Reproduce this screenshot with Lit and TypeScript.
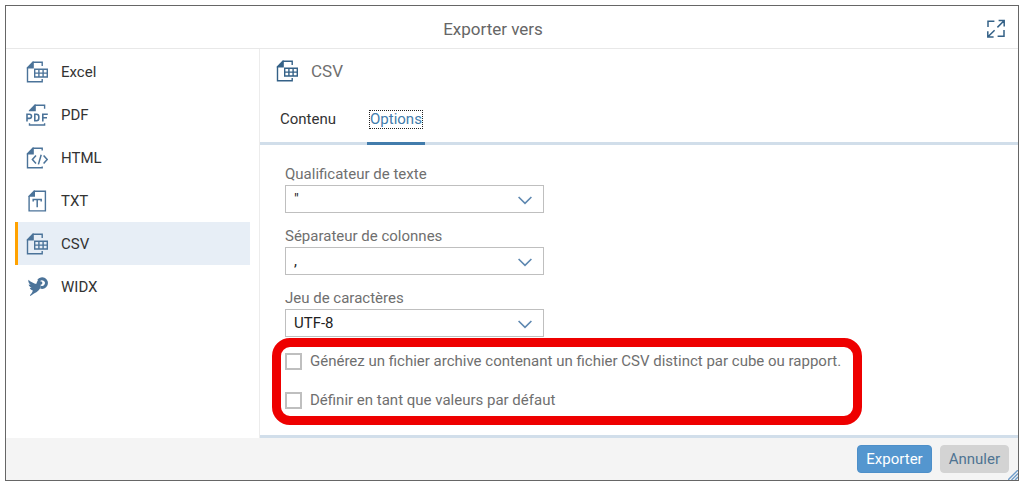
import { LitElement, html, css, svg, TemplateResult } from "lit";
import { customElement, property, state } from "lit/decorators.js";
import { classMap } from "lit/directives/class-map.js";

type IconName = "sheet" | "pdf" | "html" | "txt" | "widx" | "expand" | "chevron";

const pageFold = svg`<path d="M7.8 0.6 V7.4 H0.8 V6.4 L6.6 0.6 Z" fill="currentColor" stroke="none"/>`;

const icons: Record<IconName, TemplateResult> = {
  sheet: svg`
    ${pageFold}
    <path d="M6.6 1.3 H16.2 V5 M1.5 6.6 V20.8 H16.2 V18" />
    <path d="M8.7 8.2 H21.3 V16 H8.7 Z M8.7 12.1 H21.3 M12.9 8.2 V16 M17.1 8.2 V16" />`,
  pdf: svg`
    <path d="M9.8 0.6 V7.2 H2.8 V6.4 L8.6 0.6 Z" fill="currentColor" stroke="none"/>
    <path d="M8.6 1.3 H18.6 V4.8 M3.5 19.2 V21 H18.6 V19.2" />
    <path d="M1 17.4 V10.2 H3.4 A2 2 0 0 1 3.4 14.4 H1 M8.8 10.2 V16.7 H10.4 A2.4 2.4 0 0 0 12.8 14.3 V12.6 A2.4 2.4 0 0 0 10.4 10.2 Z M16.8 17.4 V10.2 H21.8 M16.8 13.8 H21" stroke-width="1.6"/>`,
  html: svg`
    ${pageFold}
    <path d="M6.6 1.3 H16.2 V3.6 M1.5 6.6 V20.8 H16.2 V19.4" />
    <path d="M10 8.6 L6.4 12.6 L10 16.6 M17.6 8.6 L21.2 12.6 L17.6 16.6 M15.2 7.8 L12.4 17.4" stroke-width="1.5"/>`,
  txt: svg`
    <path d="M9 0.6 V6.8 H2.4 V6 L7.8 0.6 Z" fill="currentColor" stroke="none"/>
    <path d="M7.8 1.3 H19.4 V20.9 H3.1 V6" />
    <path d="M7.2 11.4 V9.4 H15.2 V11.4 M11.2 9.4 V17.2" stroke-width="1.5"/>`,
  widx: svg`
    <path d="M2.4 3.8 C5.2 6.4 7.8 7.4 10.2 8 C11 5.6 11.8 3.6 13.8 2.4 L14.6 8.6 L14.8 11 C13.4 14 11.6 16.2 8 17.4 C6.8 18 5.6 19 4.4 20 C3.6 19.6 4.2 18.6 5.2 17.8 C6.2 16.8 6.6 15.6 6.8 14.6 C5.2 14 4.2 13.2 3.8 12 L5.6 12 C3.8 11 3 10 2.6 8.6 L4.6 8.8 C2.8 7.4 2 5.8 2.4 3.8 Z" fill="currentColor" stroke="none"/>
    <path d="M12.6 4.6 A4.3 4.3 0 1 1 14.6 11.1" stroke-width="3"/>
    <circle cx="14.6" cy="7" r="1.8" fill="currentColor" stroke="none"/>`,
  expand: svg`
    <path d="M2 9 V3.2 H8.4 M18 12 V18.2 H11.6 M11.4 9.4 L18 2.8 M12.6 2.6 H18.2 V8.4 M8.6 12.2 L2 18.8 M1.8 13.2 V19 H7.6" stroke-width="1.5"/>`,
  chevron: svg`<path d="M4.6 8 L11 14.4 L17.4 8" stroke-width="1.6"/>`,
};

@customElement("ui-icon")
export class UiIcon extends LitElement {
  @property() name: IconName = "sheet";

  static styles = css`
    :host {
      display: block;
      flex: none;
      width: 22px;
      height: 22px;
    }
    .glyph {
      display: block;
      width: 100%;
      height: 100%;
      fill: none;
      stroke: currentColor;
      stroke-width: 1.4;
    }
  `;

  render() {
    return html`<svg class="glyph" viewBox="0 0 22 22" aria-hidden="true">${icons[this.name]}</svg>`;
  }
}

@customElement("select-field")
export class SelectField extends LitElement {
  @property() label = "";
  @property({ type: Array }) options: string[] = [];

  static styles = css`
    :host {
      display: block;
    }
    .label {
      display: block;
      line-height: 20px;
      margin-bottom: 1px;
      color: #6f6f6f;
    }
    .control {
      position: relative;
      max-width: 259px;
    }
    .select {
      appearance: none;
      display: block;
      box-sizing: border-box;
      width: 100%;
      height: 28px;
      margin: 0;
      padding: 0 32px 0 8px;
      border: 1px solid #bfbfbf;
      border-radius: 0;
      background: #fff;
      color: #222;
      font: inherit;
    }
    .arrow {
      position: absolute;
      right: 8px;
      top: 4px;
      color: #5d87b0;
      pointer-events: none;
    }
  `;

  render() {
    return html`
      <label class="label" for="field">${this.label}</label>
      <div class="control">
        <select class="select" id="field">
          ${this.options.map((o) => html`<option>${o}</option>`)}
        </select>
        <ui-icon class="arrow" name="chevron"></ui-icon>
      </div>
    `;
  }
}

interface Format {
  name: string;
  icon: IconName;
}

@customElement("app-root")
export class AppRoot extends LitElement {
  @state() private format = "CSV";
  @state() private tab = "Options";

  private formats: Format[] = [
    { name: "Excel", icon: "sheet" },
    { name: "PDF", icon: "pdf" },
    { name: "HTML", icon: "html" },
    { name: "TXT", icon: "txt" },
    { name: "CSV", icon: "sheet" },
    { name: "WIDX", icon: "widx" },
  ];

  static styles = css`
    :host {
      display: block;
      padding: 5px;
      background: #fff;
      color: #333;
      font-family: Roboto, "Liberation Sans", sans-serif;
      font-size: 15px;
      line-height: 20px;
    }
    button {
      margin: 0;
      padding: 0;
      border: 0;
      background: none;
      color: inherit;
      font: inherit;
    }
    .dialog {
      position: relative;
      border: 1px solid #666;
      background: #fff;
    }
    .header {
      display: grid;
      grid-template-columns: 1fr auto 1fr;
      align-items: center;
      height: 43px;
      padding: 3px 10px 0 0;
      box-sizing: border-box;
      border-bottom: 1px solid #e8e8e8;
    }
    .title {
      grid-column: 2;
      margin: 0 28px 0 0;
      font-size: 17px;
      font-weight: 400;
      color: #666;
    }
    .expand {
      justify-self: end;
      color: #346187;
    }
    .body {
      display: grid;
      grid-template-columns: 254px 1fr;
    }
    .nav {
      padding: 1px 9px 0 9px;
      border-right: 1px solid #ececec;
    }
    .item {
      display: flex;
      align-items: center;
      gap: 13px;
      width: 100%;
      height: 43px;
      box-sizing: border-box;
      padding-left: 8px;
      border-left: 3px solid transparent;
      text-align: left;
    }
    .item ui-icon {
      color: #4b7399;
    }
    .item.selected {
      border-left-color: #ffa200;
      background: #e7eef6;
    }
    .main {
      border-bottom: 3px solid #d1deea;
      padding-bottom: 10px;
    }
    .heading {
      display: flex;
      align-items: center;
      gap: 13px;
      margin: 0;
      padding: 11px 16px 0;
      font-size: 17px;
      font-weight: 400;
      color: #6f6f6f;
    }
    .heading ui-icon {
      color: #346187;
    }
    .tabs {
      display: flex;
      gap: 28px;
      margin-top: 28px;
      padding-left: 17px;
      border-bottom: 3px solid #d1deea;
    }
    .tab {
      padding: 0 2px 13px;
      margin-bottom: -3px;
      border-bottom: 3px solid transparent;
      color: #333;
      outline: none;
    }
    .tab-text {
      display: block;
      border: 1px dotted transparent;
      line-height: 17px;
    }
    .tab.active {
      border-bottom-color: #427cac;
      color: #427cac;
    }
    .tab.active .tab-text {
      border-color: #222;
    }
    .form {
      display: flex;
      flex-direction: column;
      gap: 13px;
      padding: 19px 25px 0;
    }
    .callout {
      display: flex;
      flex-direction: column;
      align-items: flex-start;
      gap: 19px;
      width: fit-content;
      margin: 1px 12px 0;
      padding: 4px 12px 6px 4px;
      border: 9px solid #ee0000;
      border-radius: 18px;
    }
    .check {
      display: flex;
      align-items: center;
      gap: 8px;
      color: #6f6f6f;
    }
    .box {
      appearance: none;
      flex: none;
      box-sizing: border-box;
      width: 17px;
      height: 17px;
      margin: 0;
      border: 2px solid #bfbfbf;
      background: #fff;
    }
    .box:checked {
      background: #427cac;
    }
    .footer {
      display: flex;
      justify-content: flex-end;
      gap: 8px;
      padding: 7px 9px;
      background: #f4f4f4;
    }
    .action {
      height: 28px;
      padding: 0 8px;
      border: 1px solid #d3d3d3;
      border-radius: 4px;
      background: #d3d3d3;
      color: #4f7492;
    }
    .action.primary {
      border-color: #4d8fc9;
      background: #5496cf;
      color: #fff;
    }
    .grip {
      position: absolute;
      right: 0;
      bottom: 0;
      width: 10px;
      height: 10px;
      stroke: #6f9cc9;
      stroke-width: 1.4;
    }
  `;

  render() {
    return html`
      <section class="dialog" role="dialog" aria-labelledby="title">
        <header class="header">
          <h1 class="title" id="title">Exporter vers</h1>
          <button class="expand" aria-label="Agrandir"><ui-icon name="expand"></ui-icon></button>
        </header>
        <div class="body">
          <nav class="nav">
            ${this.formats.map(
              (f) => html`
                <button
                  class=${classMap({ item: true, selected: f.name === this.format })}
                  @click=${() => (this.format = f.name)}
                >
                  <ui-icon name=${f.icon}></ui-icon><span>${f.name}</span>
                </button>
              `
            )}
          </nav>
          <main class="main">
            <h2 class="heading"><ui-icon name="sheet"></ui-icon>CSV</h2>
            <div class="tabs" role="tablist">
              ${["Contenu", "Options"].map(
                (t) => html`
                  <button
                    role="tab"
                    aria-selected=${t === this.tab}
                    class=${classMap({ tab: true, active: t === this.tab })}
                    @click=${() => (this.tab = t)}
                  ><span class="tab-text">${t}</span></button>
                `
              )}
            </div>
            <div class="form">
              <select-field label="Qualificateur de texte" .options=${['"', "'"]}></select-field>
              <select-field label="Séparateur de colonnes" .options=${[",", ";"]}></select-field>
              <select-field label="Jeu de caractères" .options=${["UTF-8"]}></select-field>
            </div>
            <div class="callout">
              <label class="check">
                <input class="box" type="checkbox" />
                <span>Générez un fichier archive contenant un fichier CSV distinct par cube ou rapport.</span>
              </label>
              <label class="check">
                <input class="box" type="checkbox" />
                <span>Définir en tant que valeurs par défaut</span>
              </label>
            </div>
          </main>
        </div>
        <footer class="footer">
          <button class="action primary">Exporter</button>
          <button class="action">Annuler</button>
        </footer>
        <svg class="grip" viewBox="0 0 10 10" aria-hidden="true">
          <path d="M0 10 L10 0 M3.5 10 L10 3.5 M7 10 L10 7" />
        </svg>
      </section>
    `;
  }
}
